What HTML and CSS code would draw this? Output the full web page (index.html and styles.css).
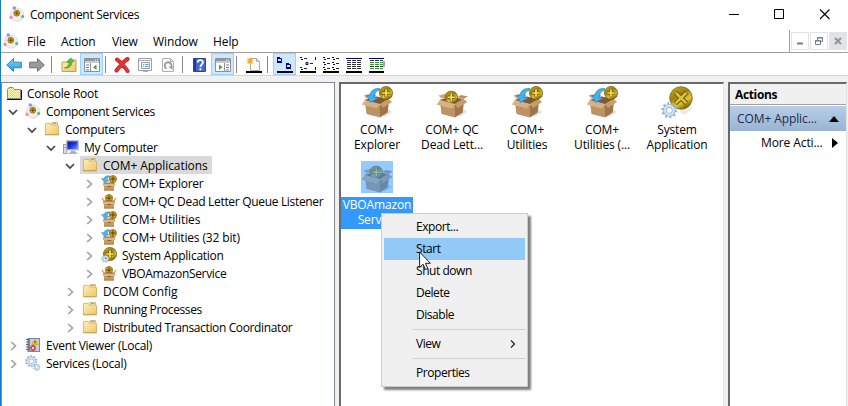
FILE: index.html
```html
<!DOCTYPE html>
<html lang="en">
<head>
<meta charset="utf-8">
<title>Component Services</title>
<link rel="stylesheet" href="styles.css">
</head>
<body>
<svg class="defs" width="0" height="0" aria-hidden="true">
  <defs>
    <linearGradient id="gold" x1="0" y1="0" x2="0.6" y2="1"><stop offset="0" stop-color="#d3b62a"/><stop offset=".45" stop-color="#9c8010"/><stop offset=".75" stop-color="#e2c83a"/><stop offset="1" stop-color="#7b650c"/></linearGradient>
    <linearGradient id="folderFill" x1="0" y1="0" x2="1" y2="1"><stop offset="0" stop-color="#fff0b8"/><stop offset="1" stop-color="#efc566"/></linearGradient>
    <linearGradient id="blueArrow" x1="0" y1="0" x2="0" y2="1"><stop offset="0" stop-color="#8ad8fa"/><stop offset="1" stop-color="#1f97dc"/></linearGradient>
    <linearGradient id="screen" x1="0" y1="0" x2="1" y2="1"><stop offset="0" stop-color="#0a14a0"/><stop offset=".5" stop-color="#1c34e0"/><stop offset="1" stop-color="#8ea8ff"/></linearGradient>
    <pattern id="dither" width="2" height="2" patternUnits="userSpaceOnUse"><rect width="2" height="2" fill="#fffbb0"/><rect width="1" height="1" fill="#efe400"/><rect x="1" y="1" width="1" height="1" fill="#efe400"/></pattern>
  </defs>
  <symbol id="com" viewBox="0 0 16 16">
    <circle cx="8" cy="8.6" r="6.6" fill="#eceef2" stroke="#d3d6dd" stroke-width=".8"/>
    <circle cx="7.8" cy="7.2" r="2.900" fill="#e0a61c" stroke="#86640c" stroke-width=".8"/>
    <path d="M7.800 5.200v4M5.800 7.200h4" stroke="#5e4400" stroke-width=".9"/>
    <circle cx="5.3" cy="2" r="1.8" fill="#9092ea"/>
    <circle cx="2" cy="11.4" r="1.6" fill="#ea8d98"/>
    <circle cx="13.6" cy="10.6" r="1.5" fill="#4fb878"/>
  </symbol>
  <symbol id="root" viewBox="0 0 16 16">
    <path d="M1.500 13.500V4.500L3 2.500h4l1.500 2h6v9z" fill="url(#dither)" stroke="#8a8a8a" stroke-width="1"/>
    <path d="M1 14.500h14.500V5" fill="none" stroke="#111" stroke-width="1"/>
  </symbol>
  <symbol id="folder" viewBox="0 0 16 16">
    <path d="M8 1.500h5.500v3H8z" fill="#fff" stroke="#c9a95a" stroke-width=".8"/>
    <path d="M9 2.600h3.500" stroke="#59a6e8" stroke-width="1"/>
    <path d="M1.400 13.600V3.200q0-.8.8-.8h4.300l1 1.600h6q1 0 1 1v8.600z" fill="url(#folderFill)" stroke="#d0a854" stroke-width=".8"/>
    <path d="M1.200 13.800h13.500" stroke="#bd9546" stroke-width=".8"/>
  </symbol>
  <symbol id="pc" viewBox="0 0 16 16">
    <rect x=".5" y="5.500" width="3.500" height="9" fill="#d9dce0" stroke="#8c9197" stroke-width=".8"/>
    <path d="M1.500 8.500h1.500" stroke="#38a838" stroke-width="1"/>
    <rect x="3.800" y="1.800" width="11.400" height="9" fill="url(#screen)" stroke="#b5bac2" stroke-width="1.200"/>
    <path d="M8 11.500h4l1 2.400H7z" fill="#b4b8be"/><path d="M5.500 14.200h9" stroke="#8f959c" stroke-width="1"/>
  </symbol>
  <symbol id="boxbody" viewBox="0 0 32 32">
    <path d="M23 31l8-5-5-4-4 4z" fill="#000" opacity=".12"/>
    <path d="M3 14l13-3.500 12 3-9 5z" fill="#7c5a35"/>
    <path d="M4 16l15 3v12.500L5.500 28z" fill="#bd9264"/>
    <path d="M19 19l9-4-1.300 11.500L19 31.500z" fill="#a07647"/>
    <path d="M4 14L0.800 18.500l15 4L19 18z" fill="#d7b086"/>
    <path d="M19 18l3 4 9-6-4-3.200z" fill="#c79b6c"/>
    <path d="M5.500 12.500L2.500 9.500 13 7l3 3.500z" fill="#d0a678"/>
    <path d="M27 13l5-2.500-7-1.500-3.500 2z" fill="#b98d5d"/>
  </symbol>
  <symbol id="coin" viewBox="0 0 14 14">
    <circle cx="7" cy="7" r="6.500" fill="url(#gold)" stroke="#6b590c" stroke-width=".8"/>
    <path d="M7 2.800v8.400M2.800 7h8.400" stroke="#6b5300" stroke-width="3"/>
    <path d="M7 3.200v7.600M3.200 7h7.600" stroke="#ffe452" stroke-width="1.700"/>
  </symbol>
  <symbol id="scoin" viewBox="0 0 8 8">
    <circle cx="4" cy="4" r="3.500" fill="#dba41e" stroke="#8a660e" stroke-width=".8"/>
    <path d="M4 1.500v5M1.500 4h5" stroke="#54400a" stroke-width="1"/>
  </symbol>
  <symbol id="importbox" viewBox="0 0 32 32">
    <use href="#boxbody" width="32" height="32"/>
    <path d="M18.500 2.500C13 2 9.500 5 8.500 10L5.500 9l4 7.500 7.500-4.500-4-.8C13.500 7.500 15 4.800 18.500 4.200z" fill="#45b0ee" stroke="#1f83c4" stroke-width=".7"/>
    <use href="#coin" x="18" y="0" width="14" height="14"/>
  </symbol>
  <symbol id="appbox" viewBox="0 0 32 32">
    <use href="#boxbody" width="32" height="32"/>
    <use href="#coin" x="8.500" y="4.500" width="13.500" height="13.500"/>
    <path d="M4 14.500L0.800 18.500l15 4L19 18z" fill="#d7b086"/>
    <path d="M19 18l3 4 9-6-4-3.200z" fill="#c79b6c"/>
  </symbol>
  <symbol id="sboxbody" viewBox="0 0 16 16">
    <path d="M2.500 7.500h11v3h-11z" fill="#86623c"/>
    <path d="M3 9.500h10v6H3z" fill="#c79a63"/><path d="M3 14.500h10v1H3z" fill="#a97e4b"/>
    <path d="M2.600 8.600h11l1 2.400H1.600z" fill="#ddb67e"/>
    <path d="M6.500 11.500h3.500" stroke="#8b6336" stroke-width="1"/>
  </symbol>
  <symbol id="simport" viewBox="0 0 16 16">
    <use href="#sboxbody" width="16" height="16"/>
    <path d="M8.500 .8C5.500 .3 3.500 1.500 3 3.800L.5 3.500l3.300 4.300L8 5.300l-2-.6C6.500 3 7.500 2 8.500 1.800z" fill="#4fb2ec" stroke="#2a86c4" stroke-width=".5"/>
    <use href="#scoin" x="7.800" y="0" width="8.200" height="8.200"/>
  </symbol>
  <symbol id="sapp" viewBox="0 0 16 16">
    <use href="#scoin" x="3.900" y="1" width="8.200" height="8.200"/>
    <use href="#sboxbody" width="16" height="16"/>
    <path d="M3 8.500L1.200 5M13 8.500l1.800-3.500" stroke="#c79a63" stroke-width="1.300"/>
  </symbol>
  <symbol id="gear" viewBox="0 0 16 16">
    <circle cx="8" cy="8" r="6.500" fill="none" stroke="#8fb4d6" stroke-width="2.600" stroke-dasharray="1.900 2.180"/>
    <circle cx="8" cy="8" r="4.300" fill="none" stroke="#86aed2" stroke-width="3.600"/>
    <circle cx="8" cy="8" r="4.300" fill="none" stroke="#cfe3f4" stroke-width="2.400"/>
  </symbol>
  <symbol id="ssystem" viewBox="0 0 16 16">
    <use href="#coin" x="2" y="0" width="14" height="14"/>
    <use href="#gear" x="0" y="7.500" width="8.500" height="8.500"/>
  </symbol>
  <symbol id="system" viewBox="0 0 32 32">
    <path d="M18 26l12-8 1 5-7 6z" fill="#000" opacity=".08"/>
    <circle cx="20" cy="12" r="11.300" fill="url(#gold)" stroke="#7a680f" stroke-width=".8"/>
    <path d="M14.500 6.500l11 11M25.500 6.500l-11 11" stroke="#77610a" stroke-width="4.600"/>
    <path d="M14.800 6.800l10.400 10.400M25.200 6.800L14.800 17.200" stroke="#dec343" stroke-width="2.600"/>
    <use href="#gear" x="0" y="16" width="16.500" height="16.500"/>
  </symbol>
  <symbol id="event" viewBox="0 0 16 16">
    <path d="M2.500 1h12.500v14H2.500z" fill="#7587a0"/><path d="M5 2h9v12H5z" fill="#c4d0e0"/>
    <path d="M1 2.500h3M1 5h3M1 7.500h3M1 10h3M1 12.500h3" stroke="#5a6472" stroke-width="1"/>
    <path d="M10 2.200l3.200 5.300H6.900z" fill="#ffd21c" stroke="#bd9200" stroke-width=".6"/><path d="M10 4v2.500" stroke="#332b00" stroke-width=".9"/>
    <circle cx="8" cy="11" r="2.900" fill="#d94048"/><path d="M6.800 9.800l2.400 2.400M9.200 9.800l-2.400 2.400" stroke="#fff" stroke-width=".9"/>
  </symbol>
  <symbol id="services" viewBox="0 0 16 16">
    <use href="#gear" x="0" y="0" width="12.500" height="12.500"/>
    <use href="#gear" x="8" y="8.500" width="7.500" height="7.500"/>
  </symbol>
  <symbol id="arrow" viewBox="0 0 16 16"><path d="M.7 8L7.500 1.700v3.500h7.800v5.600H7.500v3.500z" stroke-width="1"/></symbol>
  <symbol id="winleft" viewBox="0 0 16 16">
    <path d="M.5 1.500h15v13H.5z" fill="#fff" stroke="#8a9199"/><path d="M1 2h14v2.500H1z" fill="#8f979f"/><path d="M1 5h14v1H1z" fill="#c6cbd0"/>
    <path d="M11 3h1M13 3h1" stroke="#fff"/><path d="M6.500 6v8.500" stroke="#8a9199"/>
    <path d="M2 8h3M2 10.500h3M2 13h3" stroke="#4d7fc4"/><path d="M12.500 7.500v5.500L9 10.200z" fill="#39a935"/>
  </symbol>
  <symbol id="winright" viewBox="0 0 16 16">
    <path d="M.5 1.500h15v13H.5z" fill="#fff" stroke="#8a9199"/><path d="M1 2h14v2.500H1z" fill="#8f979f"/><path d="M1 5h14v1H1z" fill="#c6cbd0"/>
    <path d="M11 3h1M13 3h1" stroke="#fff"/><path d="M9.500 6v8.500" stroke="#8a9199"/>
    <path d="M11 8h3M11 10.500h3M11 13h3" stroke="#777"/><path d="M4 7.500v5.500l3.500-2.800z" fill="#39a935"/>
  </symbol>
  <symbol id="chevdown" viewBox="0 0 10 10"><path d="M1 3l4 4 4-4" fill="none" stroke="#454545" stroke-width="1.700"/></symbol>
  <symbol id="chevright" viewBox="0 0 10 10"><path d="M3.200 1l4.300 4-4.300 4" fill="none" stroke="#a3a3a3" stroke-width="1.700"/></symbol>
</svg>

<div class="window">
  <header class="titlebar">
    <svg class="i16"><use href="#com"/></svg>
    <span class="title">Component Services</span>
    <svg class="caption-icons" width="102" height="12" viewBox="0 0 102 12" fill="none" stroke="#000">
      <path d="M0 6.500h10"/><path d="M45.500 1.500h9v9h-9z"/><path d="M91 1.500l9.500 9.500M100.500 1.500L91 11" stroke-width="1.100"/>
    </svg>
  </header>

  <nav class="menubar">
    <svg class="i16"><use href="#com"/></svg>
    <span class="m-file">File</span><span class="m-action">Action</span><span class="m-view">View</span><span class="m-window">Window</span><span class="m-help">Help</span>
    <div class="mdi">
      <span class="mdi-button"><svg width="10" height="10"><path d="M2 7.500h6" stroke="#70808f" stroke-width="2"/></svg></span>
      <span class="mdi-button"><svg width="10" height="10" fill="none" stroke="#70808f"><path d="M3.500 4V1.500h5v4H6.500M3 2h6"/><path d="M1.500 4.500h5v4h-5zM1 5h6"/></svg></span>
      <span class="mdi-button mdi-off"><svg width="10" height="10"><path d="M2 2l6 6M8 2L2 8" stroke="#8997a5" stroke-width="2"/></svg></span>
    </div>
  </nav>

  <div class="toolbar">
    <span class="tool"><svg class="i16 back"><use href="#arrow"/></svg></span>
    <span class="tool"><svg class="i16 forward"><use href="#arrow"/></svg></span>
    <i class="sep sep-a"></i>
    <span class="tool"><svg class="i16" viewBox="0 0 16 16"><path d="M1 14.500V5h5l1-2h8v11.500z" fill="url(#folderFill)" stroke="#c39f50"/><path d="M3.500 11C7 10 8.300 7.500 8.200 5.200L6 5.500 9.800 1 13 4.700l-2.200.1C11 9 8 11.500 3.500 11z" fill="#4fc13b" stroke="#2d8f20" stroke-width=".6"/></svg></span>
    <span class="tool on"><svg class="i16"><use href="#winleft"/></svg></span>
    <i class="sep sep-b"></i>
    <span class="tool"><svg class="i16" viewBox="0 0 16 16"><path d="M3 2.500Q6 5 8 7q2.500-3 5.500-5M13.500 14Q11 10 8 7.500 5 10 2.500 13.500" fill="none" stroke="#b8181c" stroke-width="4" stroke-linecap="round"/><path d="M3 2.500Q6 5 8 7q2.500-3 5.500-5M13.500 14Q11 10 8 7.500 5 10 2.500 13.500" fill="none" stroke="#e93034" stroke-width="2.800" stroke-linecap="round"/></svg></span>
    <span class="tool"><svg class="i16" viewBox="0 0 16 16"><path d="M1.500 1.500h13v12h-13z" fill="#fff" stroke="#9aa1a8"/><path d="M1 3.500h14" stroke="#a4abb2"/><path d="M4.500 5.500h8v6h-8z" fill="#fff" stroke="#959ca3"/><path d="M6 7.500h1M8 7.500h3.500M6 9.500h1M8 9.500h3.500" stroke="#5ba8d0"/><path d="M6 14.500h5" stroke="#aab1b8"/></svg></span>
    <span class="tool"><svg class="i16" viewBox="0 0 16 16"><path d="M2.500 1.500h8l3 3v10h-11z" fill="#f8f8f8" stroke="#b0b0b0"/><path d="M10.500 1.500v3h3" fill="none" stroke="#b0b0b0"/><path d="M6.300 11.500a3.400 3.400 0 1 1 4.500-.7" fill="none" stroke="#999" stroke-width="1.800"/><path d="M8.500 9.500h4V13z" fill="#999"/></svg></span>
    <i class="sep sep-c"></i>
    <span class="tool"><svg class="i16" viewBox="0 0 16 16"><path d="M1.500 1.500h12v13h-12z" fill="#4468cc" stroke="#2c4898"/><path d="M2 2h2v12H2z" fill="#213f92"/><path d="M5.700 5.500c0-3.200 5.300-3.200 5.200 0C10.900 7.500 8.500 7.300 8.400 10M8.400 11.300v2" fill="none" stroke="#fff" stroke-width="1.900"/></svg></span>
    <span class="tool on"><svg class="i16"><use href="#winright"/></svg></span>
    <i class="sep sep-d"></i>
    <span class="tool"><svg class="i16" viewBox="0 0 16 16"><path d="M4.500 1.500h6l3 3v9h-9z" fill="#fafafa" stroke="#aaa"/><path d="M10.500 1.500v3h3" fill="none" stroke="#aaa"/><path d="M0 15h16" stroke="#000" stroke-width="2"/><path d="M4 .5v7M.5 4h7M1.500 1.500l5 5M6.500 1.500l-5 5" stroke="#f5a81c" stroke-width="1.100"/></svg></span>
    <i class="sep sep-e"></i>
    <span class="tool on"><svg class="i16" viewBox="0 0 16 16" fill="none"><path d="M0 .5h3M.5 1v4M1 4.500h3.500V1.500H1M9 6.500h3M9.500 7v4M10 10.500h3.500V7.500H10" stroke="#000080"/><path d="M0 5.500h5M9 11.500h5" stroke="#000080"/><path d="M0 15h16" stroke="#000" stroke-width="2"/></svg></span>
    <span class="tool"><svg class="i16" viewBox="0 0 16 16" fill="none"><path d="M0 .5h2M1 2.500h2M0 10.500h2M1 12.500h2M6 5.500h2v2H6zM15.500 0v3M15.500 10v3" stroke="#000080"/><path d="M4 1.500h3M10 6.500h3M4 11.500h3" stroke="#222"/><path d="M0 15h16" stroke="#000" stroke-width="2"/></svg></span>
    <span class="tool"><svg class="i16" viewBox="0 0 16 16" fill="none"><path d="M0 .5h2M1 2.500h2M0 5.500h2M1 7.500h2M0 10.500h2M1 12.500h2M9 .5h2M10 2.500h2M9 5.500h2M10 7.500h2M9 10.500h2M10 12.500h2" stroke="#000080"/><path d="M4 1.500h3M4 6.500h3M4 11.500h3M13 1.500h3M13 6.500h3M13 11.500h3" stroke="#222"/><path d="M0 15h16" stroke="#000" stroke-width="2"/></svg></span>
    <span class="tool"><svg class="i16" viewBox="0 0 16 16"><path d="M0 1.500h16" stroke="#000080"/><path d="M1 3.500h14M1 5.500h14M1 7.500h14M1 9.500h14M1 11.500h14" stroke="#333" stroke-dasharray="4 1"/><path d="M0 15h16" stroke="#000" stroke-width="2"/></svg></span>
    <span class="tool"><svg class="i16" viewBox="0 0 16 16"><path d="M0 1.500h15" stroke="#000080"/><path d="M1 3.500h13M1 9.500h13" stroke="#333" stroke-dasharray="4 1"/><path d="M1 5.500h13M1 7.500h13M1 11.500h13" stroke="#2d9a35" stroke-dasharray="4 1"/><path d="M14 4h2v6h-2z" fill="#a4aaa4"/><path d="M0 15h15" stroke="#000" stroke-width="2"/></svg></span>
  </div>

  <main class="workspace">
    <section class="tree">
      <div class="row root"><svg class="i16"><use href="#root"/></svg><span class="label">Console Root</span></div>
      <div class="row l1"><svg class="chev"><use href="#chevdown"/></svg><span class="node"><svg class="i16"><use href="#com"/></svg><span class="label tight">Component Services</span></span></div>
      <div class="row l2"><svg class="chev"><use href="#chevdown"/></svg><span class="node"><svg class="i16"><use href="#folder"/></svg><span class="label">Computers</span></span></div>
      <div class="row l3"><svg class="chev"><use href="#chevdown"/></svg><span class="node"><svg class="i16"><use href="#pc"/></svg><span class="label">My Computer</span></span></div>
      <div class="row l4"><svg class="chev"><use href="#chevdown"/></svg><span class="node selected"><svg class="i16"><use href="#folder"/></svg><span class="label loose">COM+ Applications</span></span></div>
      <div class="row l5"><svg class="chev"><use href="#chevright"/></svg><span class="node"><svg class="i16"><use href="#simport"/></svg><span class="label">COM+ Explorer</span></span></div>
      <div class="row l5"><svg class="chev"><use href="#chevright"/></svg><span class="node"><svg class="i16"><use href="#sapp"/></svg><span class="label tight">COM+ QC Dead Letter Queue Listener</span></span></div>
      <div class="row l5"><svg class="chev"><use href="#chevright"/></svg><span class="node"><svg class="i16"><use href="#simport"/></svg><span class="label loose">COM+ Utilities</span></span></div>
      <div class="row l5"><svg class="chev"><use href="#chevright"/></svg><span class="node"><svg class="i16"><use href="#simport"/></svg><span class="label mid">COM+ Utilities (32 bit)</span></span></div>
      <div class="row l5"><svg class="chev"><use href="#chevright"/></svg><span class="node"><svg class="i16"><use href="#ssystem"/></svg><span class="label">System Application</span></span></div>
      <div class="row l5"><svg class="chev"><use href="#chevright"/></svg><span class="node"><svg class="i16"><use href="#sapp"/></svg><span class="label tight">VBOAmazonService</span></span></div>
      <div class="row l4"><svg class="chev"><use href="#chevright"/></svg><span class="node"><svg class="i16"><use href="#folder"/></svg><span class="label loose">DCOM Config</span></span></div>
      <div class="row l4"><svg class="chev"><use href="#chevright"/></svg><span class="node"><svg class="i16"><use href="#folder"/></svg><span class="label tighter">Running Processes</span></span></div>
      <div class="row l4"><svg class="chev"><use href="#chevright"/></svg><span class="node"><svg class="i16"><use href="#folder"/></svg><span class="label tighter">Distributed Transaction Coordinator</span></span></div>
      <div class="row l1"><svg class="chev"><use href="#chevright"/></svg><span class="node"><svg class="i16"><use href="#event"/></svg><span class="label">Event Viewer (Local)</span></span></div>
      <div class="row l1"><svg class="chev"><use href="#chevright"/></svg><span class="node"><svg class="i16"><use href="#services"/></svg><span class="label">Services (Local)</span></span></div>
    </section>

    <section class="list">
      <div class="item"><svg class="i32"><use href="#importbox"/></svg><span class="caption">COM+<br>Explorer</span></div>
      <div class="item"><svg class="i32"><use href="#appbox"/></svg><span class="caption">COM+ QC<br>Dead Lett...</span></div>
      <div class="item"><svg class="i32"><use href="#importbox"/></svg><span class="caption">COM+<br>Utilities</span></div>
      <div class="item"><svg class="i32"><use href="#importbox"/></svg><span class="caption">COM+<br>Utilities (...</span></div>
      <div class="item"><svg class="i32"><use href="#system"/></svg><span class="caption">System<br>Application</span></div>
      <div class="item active"><span class="tint"><svg class="i32"><use href="#appbox"/></svg></span><span class="caption">VBOAmazon<br>Service</span></div>
    </section>

    <aside class="actions">
      <div class="actions-title">Actions</div>
      <div class="actions-group"><span>COM+ Applic...</span><svg width="10" height="6"><path d="M0 6l5-6 5 6z"/></svg></div>
      <div class="actions-more"><span>More Acti...</span><svg width="6" height="10"><path d="M0 0l6 5-6 5z"/></svg></div>
    </aside>
  </main>

  <div class="context">
    <div class="entry">Export...</div>
    <div class="entry hot">Start</div>
    <div class="entry">Shut down</div>
    <div class="entry">Delete</div>
    <div class="entry">Disable</div>
    <hr>
    <div class="entry">View<svg width="6" height="8" fill="none" stroke="#222"><path d="M1 .5L4.500 4 1 7.500" stroke-width="1.200"/></svg></div>
    <hr>
    <div class="entry">Properties</div>
  </div>
  <svg class="cursor" width="13" height="20" viewBox="0 0 13 20"><path d="M.6 1v15.500l3.500-3.300 2.300 5.300 2.400-1-2.300-5.200h4.900z" fill="#fff" stroke="#1c1c2c" stroke-width="1"/></svg>
</div>
</body>
</html>
```

FILE: styles.css
```css
* { box-sizing: border-box; }
body {
  margin: 0;
  font: 12px/15px "Open Sans", "Noto Sans", sans-serif;
  letter-spacing: -0.1px;
  color: #000;
}
svg { display: block; flex: none; }
.defs { position: absolute; }
.i16 { width: 16px; height: 16px; }
.i32 { width: 32px; height: 32px; }

.window {
  position: relative;
  width: 848px;
  height: 406px;
  display: flex;
  flex-direction: column;
  overflow: hidden;
  background: #f0f0f0;
  border-left: 1px solid #1979ca;
  white-space: nowrap;
}

.titlebar {
  height: 30px;
  display: flex;
  align-items: center;
  padding: 0 17px 2px 8px;
  background: #fff;
}
.title { margin: 1px 0 0 5px; letter-spacing: -0.31px; }
.caption-icons { margin-left: auto; }

.menubar {
  height: 23px;
  display: flex;
  align-items: center;
  padding-left: 2px;
  background: #fff;
  border-bottom: 1px solid #a0a0a0;
}
.menubar > span { flex: none; }
.m-file { width: 34px; margin-left: 8px; }
.m-action { width: 51px; }
.m-view { width: 41px; }
.m-window { width: 60px; }
.mdi {
  margin-left: auto;
  height: 22px;
  display: flex;
  align-items: center;
  gap: 1px;
  padding: 0 1px;
  border-left: 1px solid #a0a0a0;
}
.mdi-button {
  width: 18px;
  height: 18px;
  display: grid;
  place-items: center;
  border: 1px solid #e3e3e3;
}
.mdi-off { background: #e3e3e3; }

.toolbar {
  height: 23px;
  display: flex;
  align-items: center;
  padding-left: 1px;
  background: #fff;
  border-bottom: 1px solid #d5d5d5;
}
.tool {
  width: 23px;
  height: 22px;
  padding-top: 1px;
  display: grid;
  place-items: center;
  flex: none;
}
.tool.on { background: #cce8ff; border: 1px solid #99d1ff; }
.back { fill: url(#blueArrow); stroke: #3482b4; }
.forward { fill: #9a9a9a; stroke: #6c6c6c; transform: scaleX(-1); }
.sep { width: 1px; height: 17px; flex: none; background: #8a8a8a; }
.sep-a { margin: 0 5px 0 3px; }
.sep-b { margin: 0 4px 0 2px; }
.sep-c { margin: 0 5px 0 3px; }
.sep-d { margin: 0 5px 0 2px; }
.sep-e { margin: 0 5px 0 2px; }

.workspace {
  flex: 1;
  display: flex;
  padding-top: 6px;
}
.tree {
  width: 334px;
  padding-top: 1px;
  background: #fff;
  border: 1px solid #828790;
  border-bottom: 0;
}
.row { height: 18px; display: flex; align-items: center; }
.row.root { padding-left: 4px; }
.chev { width: 10px; height: 10px; margin: 1px 5px 0 0; }
.node { height: 18px; display: flex; align-items: center; padding: 0 4px 0 2px; }
.label { margin-left: 5px; letter-spacing: -0.25px; }
.label.loose { letter-spacing: -0.08px; }
.label.mid { letter-spacing: -0.15px; }
.label.tight { letter-spacing: -0.32px; }
.label.tighter { letter-spacing: -0.37px; }
.node.selected { background: #d9d9d9; }
.l1 { padding-left: 6px; }
.l2 { padding-left: 25px; }
.l3 { padding-left: 44px; }
.l4 { padding-left: 63px; }
.l5 { padding-left: 82px; }

.list {
  width: 385px;
  margin-left: 4px;
  padding-top: 2px;
  display: grid;
  grid-template-columns: repeat(5, 72px);
  grid-auto-rows: 75px;
  column-gap: 3px;
  align-content: start;
  background: #fff;
  border: 2px solid #696969;
  border-right: 1px solid #e3e3e3;
  border-bottom: 0;
}
.item { display: flex; flex-direction: column; align-items: center; text-align: center; }
.caption { margin-top: 4px; padding: 0 2px 2px; letter-spacing: -0.15px; }
.tint { position: relative; }
.tint::after { content: ""; position: absolute; inset: 0; background: #3399ff; opacity: .52; }
.active .caption { color: #fff; background: #3399ff; }

.actions {
  width: 119px;
  margin-left: 4px;
  background: #fff;
  border: 2px solid #696969;
  border-right: 1px solid #e3e3e3;
  border-bottom: 0;
}
.actions-title {
  height: 21px;
  padding: 3px 5px;
  font-weight: 700;
  letter-spacing: -0.35px;
  background: #f0f0f0;
  border-bottom: 1px solid #a0a0a0;
}
.actions-group {
  height: 25px;
  margin-top: 1px;
  padding: 0 7px 0 7px;
  display: flex;
  align-items: center;
  justify-content: space-between;
  color: #1e2b4a;
  background: linear-gradient(#b8cde6, #98b4d4);
}
.actions-group svg { fill: #000; }
.actions-more {
  height: 24px;
  padding: 0 8px 1px 31px;
  display: flex;
  align-items: center;
  justify-content: space-between;
}

.context {
  position: absolute;
  left: 380px;
  top: 213px;
  width: 147px;
  height: 174px;
  padding: 2px;
  background: #f0f0f0;
  border: 1px solid #ccc;
  box-shadow: 3px 3px 2px rgba(0, 0, 0, .5);
}
.entry {
  height: 22px;
  padding: 0 9px 1px 32px;
  display: flex;
  align-items: center;
  justify-content: space-between;
  letter-spacing: -0.45px;
}
.entry.hot { background: #91c9f7; }
.context hr {
  height: 1px;
  margin: 3px 0 3px 28px;
  border: 0;
  background: #d0d0d0;
}
.cursor { position: absolute; left: 418px; top: 251px; }
```
